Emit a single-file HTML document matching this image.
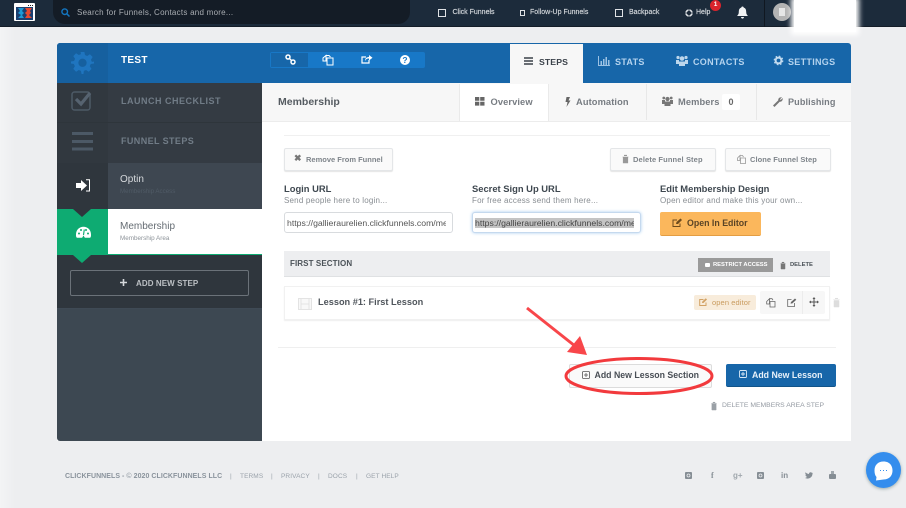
<!DOCTYPE html>
<html><head><meta charset="utf-8"><style>
*{box-sizing:border-box;margin:0;padding:0}
html,body{width:906px;height:508px;overflow:hidden;background:#edeef0;font-family:"Liberation Sans",sans-serif;position:relative}
#w{position:absolute;left:0;top:0;width:906px;height:508px;filter:blur(.3px)}
.a{position:absolute;white-space:nowrap}
svg{position:absolute;overflow:visible}
.t{font-weight:700}
.btn{position:absolute;background:#fafafa;border:1px solid #e4e6e8;border-radius:2px;box-shadow:0 1px 1px #e4e4e4;font-size:7.5px;color:#7f858b;font-weight:700;white-space:nowrap}
</style></head><body><div id="w">
<div class="a" style="left:0;top:27px;width:15px;height:481px;background:linear-gradient(90deg,#f3f4f5,#edeef0)"></div>
<div class="a" style="left:0;top:0;width:906px;height:27px;background:#1c2b3b;border-bottom:1px solid #141d28"></div>
<div class="a" style="left:14px;top:3px;width:21px;height:18px;background:#fff;border-radius:1px"></div>
<div class="a" style="left:16px;top:7px;width:17px;height:13px;background:#1b3f70"></div>
<svg style="left:14px;top:3px" width="21" height="18"><path d="M10 5L4 5 6 8 4 10 7 12 4 15H10L8 12 10 10 8 8Z" fill="#1d9ad6"/><path d="M11 5H18L16 8 17 10 15 12 18 15H11L13 12 11 10 13 8Z" fill="#e8492f"/><path d="M14 2h1v1h-1zM16 2h1v1h-1zM18 2h1v1h-1z" fill="#222"/></svg>
<div class="a" style="left:53px;top:0;width:357px;height:24px;background:#141c26;border-radius:0 0 12px 12px"></div>
<svg style="left:61px;top:8px" width="9" height="9"><circle cx="3.7" cy="3.7" r="2.8" fill="none" stroke="#1375bf" stroke-width="1.4"/><path d="M5.8 5.8L8.5 8.5" stroke="#1375bf" stroke-width="1.5"/></svg>
<div class="a" style="left:77px;top:8px;font-size:8px;color:#a9adb2;letter-spacing:.25px">Search for Funnels, Contacts and more...</div>
<div class="a" style="left:438px;top:9px;width:8px;height:8px;border:1.2px solid #dfe2e5"></div>
<div class="a" style="left:452.500px;top:8.500px;font-size:7px;color:#d5d9dd;-webkit-text-stroke:.15px #d5d9dd">Click Funnels</div>
<div class="a" style="left:520px;top:10px;width:5px;height:6px;border:1px solid #dfe2e5"></div>
<div class="a" style="left:530px;top:8.500px;font-size:7px;color:#d5d9dd;-webkit-text-stroke:.15px #d5d9dd">Follow-Up Funnels</div>
<div class="a" style="left:615px;top:9px;width:8px;height:8px;border:1.2px solid #dfe2e5"></div>
<div class="a" style="left:629px;top:8.500px;font-size:7px;color:#d5d9dd;-webkit-text-stroke:.15px #d5d9dd">Backpack</div>
<svg style="left:685px;top:9px" width="8" height="8"><circle cx="4" cy="4" r="3" fill="none" stroke="#dfe2e5" stroke-width="1.6"/><path d="M4 0v8M0 4h8" stroke="#1c2b3b" stroke-width=".7"/></svg>
<div class="a" style="left:696px;top:8.500px;font-size:7px;color:#d5d9dd;-webkit-text-stroke:.15px #d5d9dd">Help</div>
<div class="a t" style="left:710px;top:0;width:11px;height:11px;border-radius:50%;background:#d9242d;color:#fff;font-size:6.500px;text-align:center;line-height:10px">1</div>
<svg style="left:736px;top:6px" width="13" height="13"><path d="M6.500 0.500C7.400 .5 7.600 1 7.700 1.600 9.800 2.200 10.200 4 10.200 6 10.200 8 11 9 12 10H1C2 9 2.800 8 2.800 6 2.800 4 3.200 2.200 5.300 1.600 5.400 1 5.600 .5 6.500 .5ZM5 11H8C8 12 7.300 12.600 6.500 12.600S5 12 5 11Z" fill="#f1f3f4"/></svg>
<div class="a" style="left:764px;top:0;width:1px;height:27px;background:#101720"></div>
<div class="a" style="left:773px;top:3px;width:18px;height:18px;border-radius:50%;background:#b3b3b3"></div>
<div class="a" style="left:779px;top:8px;width:6px;height:8px;background:#e6e6e6"></div>
<div class="a" style="left:794px;top:0;width:62px;height:32px;background:#fff;box-shadow:0 0 5px 3px #fff"></div>

<div class="a" style="left:57px;top:43px;width:794px;height:398px;background:#fff;border-radius:3px 3px 0 0"></div>
<div class="a" style="left:57px;top:43px;width:794px;height:40px;background:#1766a9;border-radius:3px 3px 0 0"></div>
<div class="a" style="left:57px;top:43px;width:51px;height:40px;background:#16609f;border-radius:3px 0 0 0"></div>
<svg style="left:71px;top:51px" width="23" height="23" viewBox="0 0 24 24"><path fill="#1f75bf" fill-rule="evenodd" d="M10 1h4l.6 3.200 2.300 1 2.800-1.800 2.900 2.900-1.800 2.800 1 2.300L24 11v2l-3.400.6-1 2.300 1.800 2.800-2.900 2.900-2.800-1.800-2.300 1L13 24h-2l-.6-3.200-2.300-1-2.800 1.800-2.900-2.900L4 15.900l-1-2.300L0 13v-2l3.200-.6 1-2.300-1.800-2.800 2.900-2.900 2.800 1.800 2.300-1ZM12 8a4.300 4.300 0 1 0 .01 0Z"/></svg>
<div class="a t" style="left:121px;top:55px;font-size:10px;color:#fff;letter-spacing:.3px">TEST</div>
<div class="a" style="left:270px;top:52px;width:155px;height:16px;background:#1878c7;border-radius:2px"></div>
<div class="a" style="left:271px;top:53px;width:37px;height:14px;background:#1766a9"></div>
<svg style="left:285px;top:54px" width="11" height="11"><circle cx="3" cy="3" r="2" fill="none" stroke="#fff" stroke-width="1.500"/><circle cx="8" cy="8" r="2" fill="none" stroke="#fff" stroke-width="1.500"/><path d="M4 4l3 3" stroke="#fff" stroke-width="1.300"/></svg>
<svg style="left:322px;top:54px" width="12" height="12"><path d="M4 4V1.500H7L8.500 3M1 4L4 1.500V7H1ZM5 4H11V11H5Z" fill="none" stroke="#fff"/></svg>
<svg style="left:361px;top:54px" width="12" height="11"><path d="M8 6v3H1V3h4" fill="none" stroke="#fff" stroke-width="1.200"/><path d="M4 7C4 4 6 3 8 3V1l3.500 2.800L8 6.500V4.500C6 4.500 5 5 4 7Z" fill="#fff"/></svg>
<div class="a t" style="left:400px;top:55px;width:10px;height:10px;border-radius:50%;background:#fff;color:#1878c7;font-size:8.500px;line-height:10px;text-align:center">?</div>

<div class="a" style="left:510px;top:44px;width:73px;height:39px;background:#f7f7f7"></div>
<svg style="left:524px;top:57px" width="10" height="8"><path d="M0 1h9M0 4h9M0 7h9" stroke="#3a4149" stroke-width="1.400"/></svg>
<div class="a t" style="left:539px;top:56.500px;font-size:8.700px;color:#3a4149;letter-spacing:.1px">STEPS</div>
<svg style="left:598px;top:56px" width="12" height="10"><path d="M.5 0v9.500H12" fill="none" stroke="#9cc2e4"/><path d="M2.500 5h1.500v4H2.500zM5 3h1.500v6H5zM7.500 1h1.500v8H7.500zM10 4h1.500v5H10z" fill="#9cc2e4"/></svg>
<div class="a t" style="left:615px;top:56.500px;font-size:9px;color:#b4d3ee;letter-spacing:.3px">STATS</div>
<svg style="left:676px;top:55px" width="12" height="11"><circle cx="6" cy="3.500" r="2.300" fill="#bcd6ec"/><circle cx="2" cy="2.500" r="1.600" fill="#bcd6ec"/><circle cx="10" cy="2.500" r="1.600" fill="#bcd6ec"/><path d="M0 5h3L3 9H0zM9 5h3V9H9zM3 6.500h6V11H3z" fill="#bcd6ec"/></svg>
<div class="a t" style="left:693px;top:56.500px;font-size:9px;color:#b4d3ee;letter-spacing:.3px">CONTACTS</div>
<svg style="left:774px;top:56px" width="9" height="9"><circle cx="4.500" cy="4.500" r="2.900" fill="none" stroke="#c4dcf0" stroke-width="2"/><circle cx="4.500" cy="4.500" r="4.300" fill="none" stroke="#c4dcf0" stroke-width="1.100" stroke-dasharray="1.700 1.700"/></svg>
<div class="a t" style="left:788px;top:56.500px;font-size:9px;color:#b4d3ee;letter-spacing:.3px">SETTINGS</div>

<div class="a" style="left:57px;top:83px;width:205px;height:358px;background:#3d4852;border-radius:0 0 0 3px"></div>
<div class="a" style="left:57px;top:83px;width:205px;height:80px;background:#343b43"></div>
<div class="a" style="left:57px;top:83px;width:51px;height:80px;background:#31383f"></div>
<div class="a" style="left:57px;top:122px;width:205px;height:1px;background:#2e353b"></div>
<svg style="left:70px;top:90px" width="25" height="21"><rect x="2" y="2" width="18" height="18" rx="2.500" fill="none" stroke="#4d5a66" stroke-width="1.500"/><path d="M6 9l5 5 9-11" fill="none" stroke="#566370" stroke-width="3.200"/></svg>
<div class="a t" style="left:121px;top:96px;font-size:9px;color:#717c87;letter-spacing:.5px">LAUNCH CHECKLIST</div>
<svg style="left:72px;top:132px" width="22" height="19"><path d="M0 1.500h21M0 9.500h21M0 17h21" stroke="#4c5966" stroke-width="3"/></svg>
<div class="a t" style="left:121px;top:135.500px;font-size:9px;color:#717c87;letter-spacing:.4px">FUNNEL STEPS</div>

<div class="a" style="left:57px;top:163px;width:205px;height:46px;background:#3e4751"></div>
<div class="a" style="left:57px;top:163px;width:51px;height:46px;background:#2f363d"></div>
<svg style="left:76px;top:179px" width="15" height="13"><path d="M0 4h5V1l6 5.500L5 12V9H0Z" fill="#fff"/><path d="M10 .8h3.500V12H10" fill="none" stroke="#fff"/></svg>
<div class="a" style="left:120px;top:174px;font-size:10px;color:#d6d9dc">Optin</div>
<div class="a" style="left:120px;top:188px;font-size:6.200px;color:#505b66">Membership Access</div>

<div class="a" style="left:57px;top:209px;width:205px;height:45px;background:#fff"></div>
<div class="a" style="left:57px;top:209px;width:51px;height:46px;background:#0eab72"></div>
<div class="a" style="left:57px;top:254px;width:205px;height:1.500px;background:#0eab72"></div>
<div class="a" style="left:73px;top:209px;width:0;height:0;border-left:9px solid transparent;border-right:9px solid transparent;border-top:8px solid #2f363d"></div>
<svg style="left:76px;top:226px" width="15" height="13"><path d="M.8 11.800C-.2 10.500 0 9.500 0 8.500 0 4 3.300 .8 7.500 .8S15 4 15 8.500C15 9.500 15.200 10.500 14.200 11.800Z" fill="#fff"/><circle cx="3" cy="7.500" r="1" fill="#0eab72"/><circle cx="5" cy="4" r="1" fill="#0eab72"/><circle cx="12" cy="7.500" r="1" fill="#0eab72"/><circle cx="10" cy="4" r="1" fill="#0eab72"/><path d="M8.300 3.500L7.500 9" stroke="#0eab72" stroke-width="1.100"/><path d="M6 12L7.500 9.500 9 12Z" fill="#0eab72"/></svg>
<div class="a" style="left:120px;top:221px;font-size:10px;color:#656c73">Membership</div>
<div class="a" style="left:120px;top:235px;font-size:6.300px;color:#8d9399">Membership Area</div>

<div class="a" style="left:57px;top:255px;width:205px;height:54px;background:#2f363d;border-bottom:1px solid #3f4a55"></div>
<div class="a" style="left:73px;top:255px;width:0;height:0;border-left:9px solid transparent;border-right:9px solid transparent;border-top:8px solid #0eab72"></div>
<div class="a" style="left:70px;top:270px;width:179px;height:26px;border:1px solid #6b7279;border-radius:2px"></div>
<svg style="left:120px;top:279px" width="7" height="7"><path d="M3.500 0v7M0 3.500h7" stroke="#d6d9dc" stroke-width="1.600"/></svg>
<div class="a t" style="left:136px;top:278.500px;font-size:8px;color:#bcc0c4;letter-spacing:.08px">ADD NEW STEP</div>

<div class="a" style="left:262px;top:83px;width:589px;height:39px;background:#f7f7f7;border-bottom:1px solid #ececec"></div>
<div class="a t" style="left:278px;top:95.500px;font-size:10.500px;color:#555b61">Membership</div>
<div class="a" style="left:459px;top:84px;width:90px;height:37px;background:#fff;border-right:1px solid #eaeaea;border-left:1px solid #eaeaea"></div>
<div class="a" style="left:646px;top:84px;width:1px;height:36px;background:#e8e8e8"></div>
<div class="a" style="left:756px;top:84px;width:1px;height:36px;background:#e8e8e8"></div>
<svg style="left:475px;top:97px" width="10" height="9"><path d="M0 0h4.300v3.800H0zM5.200 0h4.300v3.800H5.200zM0 4.800h4.300v3.800H0zM5.200 4.800h4.300v3.800H5.200z" fill="#666"/></svg>
<div class="a t" style="left:490.500px;top:96.500px;font-size:9.300px;color:#777c82;letter-spacing:.1px">Overview</div>
<svg style="left:565px;top:97px" width="6" height="10"><path d="M1.500 0H5L3.500 3.500H5.500L1.500 10 2.500 5H.5Z" fill="#666"/></svg>
<div class="a t" style="left:576px;top:96.500px;font-size:9.300px;color:#777c82;letter-spacing:.1px">Automation</div>
<svg style="left:662px;top:96px" width="11" height="10"><circle cx="5.500" cy="3" r="2.100" fill="#777"/><circle cx="1.800" cy="2" r="1.400" fill="#777"/><circle cx="9.200" cy="2" r="1.400" fill="#777"/><path d="M0 4h3v4H0zM8 4h3v4H8zM2.500 5.500h6V10h-6z" fill="#777"/></svg>
<div class="a t" style="left:678px;top:96.500px;font-size:9.300px;color:#777c82;letter-spacing:.1px">Members</div>
<div class="a t" style="left:722px;top:94px;width:18px;height:16px;background:#fff;border-radius:2px;font-size:9px;color:#666;text-align:center;line-height:16px">0</div>
<svg style="left:773px;top:97px" width="10" height="10"><path d="M0 8.500L5.300 3.300C5 1.500 6.500 0 9 .3L7 2.300 7.700 3 9.700 1C10 3.500 8.500 5 6.700 4.700L1.500 10Z" fill="#777"/></svg>
<div class="a t" style="left:788px;top:96.500px;font-size:9.100px;color:#777c82;letter-spacing:.1px">Publishing</div>

<div class="a" style="left:284px;top:135px;width:546px;height:1px;background:#f0f0f0"></div>
<div class="btn" style="left:284px;top:148px;width:109px;height:23px;padding:6px 0 0 21px">Remove From Funnel</div>
<div class="a t" style="left:294px;top:153px;font-size:9px;color:#777">✖</div>
<div class="btn" style="left:610px;top:148px;width:106px;height:23px;padding:6px 0 0 22px;letter-spacing:.12px">Delete Funnel Step</div>
<svg style="left:622px;top:155px" width="7" height="8"><path d="M.5 2h6M1.200 2.500h4.600V8H1.200ZM2.300 1V.2h2.400V1" fill="#999" stroke="#999" stroke-width=".6"/></svg>
<div class="btn" style="left:725px;top:148px;width:106px;height:23px;padding:6px 0 0 24px;letter-spacing:.06px">Clone Funnel Step</div>
<svg style="left:737px;top:155px" width="9" height="9"><path d="M3 3V.5H5.500L6.500 2M.5 3L3 .5V5.500H.5ZM3.500 3H8.500V8.500H3.500Z" fill="none" stroke="#999" stroke-width=".8"/></svg>

<div class="a t" style="left:284px;top:183px;font-size:9.400px;color:#3f4850">Login URL</div>
<div class="a" style="left:284px;top:196px;font-size:8px;color:#888d92;letter-spacing:.2px">Send people here to login...</div>
<div class="a" style="left:284px;top:212px;width:169px;height:21px;background:#fff;border:1px solid #d8dbde;border-radius:3px;overflow:hidden"></div>
<div class="a" style="left:287px;top:218px;width:159px;overflow:hidden;font-size:8.700px;color:#555">https://gallieraurelien.clickfunnels.com/membership</div>

<div class="a t" style="left:472px;top:183px;font-size:9.400px;color:#3f4850">Secret Sign Up URL</div>
<div class="a" style="left:472px;top:196px;font-size:8px;color:#888d92;letter-spacing:.2px">For free access send them here...</div>
<div class="a" style="left:472px;top:212px;width:169px;height:21px;background:#fff;border:1px solid #c5d9ee;border-radius:3px;box-shadow:0 0 3px #a9cdf0"></div>
<div class="a" style="left:475px;top:218px;width:159px;height:10px;background:#c4c4c4"></div>
<div class="a" style="left:475px;top:218px;width:159px;overflow:hidden;font-size:8.700px;color:#444">https://gallieraurelien.clickfunnels.com/membership</div>

<div class="a t" style="left:660px;top:183px;font-size:9.400px;color:#3f4850">Edit Membership Design</div>
<div class="a" style="left:660px;top:196px;font-size:8px;color:#888d92;letter-spacing:.2px">Open editor and make this your own...</div>
<div class="a" style="left:660px;top:212px;width:101px;height:24px;background:#fbb75c;border-bottom:1px solid #e39d43;border-radius:2px"></div>
<svg style="left:672px;top:218px" width="11" height="10"><path d="M8 5.500V8.500H1V2H5" fill="none" stroke="#6d4a1c" stroke-width="1"/><path d="M4 6L4.500 4 8.500 .5 10 2 6 6Z" fill="#6d4a1c"/></svg>
<div class="a t" style="left:687px;top:218px;font-size:8.800px;color:#5a4426">Open In Editor</div>

<div class="a" style="left:284px;top:251px;width:546px;height:26px;background:#edeef0;border-bottom:1px solid #dfe1e3"></div>
<div class="a t" style="left:290px;top:258.500px;font-size:8px;color:#4b5258;letter-spacing:.1px">FIRST SECTION</div>
<div class="a" style="left:698px;top:258px;width:75px;height:14px;background:#9a9a9a"></div>
<div class="a" style="left:705px;top:263px;width:5px;height:4px;background:#fff;border-radius:1px"></div>
<div class="a t" style="left:713px;top:261.500px;font-size:5.800px;color:#fff">RESTRICT ACCESS</div>
<svg style="left:780px;top:262px" width="6" height="7"><path d="M.5 1.500h5M1 2h4V7H1ZM2 1V.2h2V1" fill="#777" stroke="#777" stroke-width=".5"/></svg>
<div class="a t" style="left:790px;top:261.500px;font-size:5.800px;color:#4b5258">DELETE</div>

<div class="a" style="left:284px;top:286px;width:546px;height:34px;background:#fff;border:1px solid #f1f1f1;box-shadow:0 1px 1px #eee"></div>
<svg style="left:298px;top:298px" width="14" height="12"><rect x=".5" y=".5" width="13" height="11" fill="#f8f8f8" stroke="#e3e3e3"/><path d="M3 .5v11M11 .5v11M3 6h8" stroke="#e3e3e3"/></svg>
<div class="a t" style="left:318px;top:297px;font-size:9.200px;color:#50565c">Lesson #1: First Lesson</div>
<div class="a" style="left:694px;top:295px;width:62px;height:15px;background:#f8ecdb;border-radius:2px"></div>
<svg style="left:699px;top:298px" width="9" height="8"><path d="M7 4.500V7.500H.7V1.500H4.500" fill="none" stroke="#d2a265"/><path d="M3 5L3.300 3.500 6.800 .3 8 1.500 4.500 5Z" fill="#d2a265"/></svg>
<div class="a" style="left:712px;top:298px;font-size:7.500px;color:#c99b5e;letter-spacing:.1px">open editor</div>
<div class="a" style="left:760px;top:291px;width:65px;height:23px;background:#f7f7f7;border-radius:2px"></div>
<div class="a" style="left:802px;top:291px;width:1px;height:23px;background:#ececec"></div>
<svg style="left:766px;top:298px" width="10" height="10"><path d="M3.500 3V.7H6L7 2.200M.7 3.500L3.500.7V6H.7ZM4 3.500H9V9H4Z" fill="none" stroke="#666" stroke-width=".8"/></svg>
<svg style="left:787px;top:298px" width="10" height="9"><path d="M7.500 5V8.500H.7V1.500H4.500" fill="none" stroke="#666" stroke-width=".8"/><path d="M3.500 5.500L4 4 8 .5 9.300 1.800 5.200 5.500Z" fill="#666"/></svg>
<svg style="left:809px;top:297px" width="10" height="10"><path d="M5 0L6.500 2H5.500V4.500H8V3.500L10 5 8 6.500V5.500H5.500V8H6.500L5 10 3.500 8H4.500V5.500H2V6.500L0 5 2 3.500V4.500H4.500V2H3.500Z" fill="#555"/></svg>
<svg style="left:833px;top:298px" width="7" height="9"><path d="M.3 1.800H6.700M1 2.500H6V9H1ZM2.200 1V.2H4.800V1" fill="#ddd" stroke="#ddd" stroke-width=".5"/></svg>

<div class="a" style="left:278px;top:347px;width:558px;height:1px;background:#efefef"></div>
<div class="a" style="left:569px;top:364px;width:143px;height:24px;background:#fafafa;border:1px solid #dcdcdc;border-radius:2px"></div>
<svg style="left:582px;top:371px" width="8" height="8"><rect x=".5" y=".5" width="7" height="7" rx="1" fill="none" stroke="#555" stroke-width=".8"/><path d="M4 2v4M2 4h4" stroke="#555" stroke-width=".8"/></svg>
<div class="a t" style="left:594.500px;top:370px;font-size:8.750px;color:#484e55">Add New Lesson Section</div>
<div class="a" style="left:726px;top:364px;width:110px;height:23px;background:#1766a9;border-radius:2px;border-bottom:1px solid #125489"></div>
<svg style="left:739px;top:370px" width="8" height="8"><rect x=".5" y=".5" width="7" height="7" rx="1" fill="none" stroke="#d8e8f6" stroke-width=".9"/><path d="M4 2v4M2 4h4" stroke="#d8e8f6" stroke-width=".9"/></svg>
<div class="a t" style="left:752px;top:369.500px;font-size:8.750px;color:#e8f1f9">Add New Lesson</div>
<svg style="left:711px;top:402px" width="6" height="8"><path d="M.2 1.300H5.800M.9 2H5.100V8H.9ZM2 1V.2H4V1" fill="#9aa0a6" stroke="#9aa0a6" stroke-width=".5"/></svg>
<div class="a" style="left:722px;top:402px;font-size:6.800px;color:#959ba3">DELETE MEMBERS AREA STEP</div>

<svg style="left:0;top:0" width="906" height="508">
<ellipse cx="639" cy="376" rx="73" ry="17.500" fill="none" stroke="#f23a3d" stroke-width="3"/>
<path d="M527 308L575 346" stroke="#f8464a" stroke-width="3"/>
<path d="M587 355L567 352 580 336Z" fill="#f8464a"/>
</svg>

<div class="a" style="left:65px;top:472.500px;font-size:7px;color:#8a939c;font-weight:700;letter-spacing:.05px">CLICKFUNNELS - <span style="font-weight:400">©</span> 2020 CLICKFUNNELS LLC</div>
<div class="a" style="left:230px;top:472.500px;font-size:6.500px;color:#9aa2aa;letter-spacing:.1px">|</div>
<div class="a" style="left:240px;top:472.500px;font-size:6.500px;color:#9aa2aa;letter-spacing:.1px">TERMS</div>
<div class="a" style="left:271px;top:472.500px;font-size:6.500px;color:#9aa2aa">|</div>
<div class="a" style="left:281px;top:472.500px;font-size:6.500px;color:#9aa2aa;letter-spacing:.1px">PRIVACY</div>
<div class="a" style="left:318px;top:472.500px;font-size:6.500px;color:#9aa2aa">|</div>
<div class="a" style="left:328px;top:472.500px;font-size:6.500px;color:#9aa2aa;letter-spacing:.1px">DOCS</div>
<div class="a" style="left:356px;top:472.500px;font-size:6.500px;color:#9aa2aa">|</div>
<div class="a" style="left:366px;top:472.500px;font-size:6.500px;color:#9aa2aa;letter-spacing:.1px">GET HELP</div>

<svg style="left:685px;top:472px" width="7" height="7"><rect width="7" height="7" rx="1" fill="#858d94"/><circle cx="3.500" cy="3.500" r="1.500" fill="none" stroke="#edeef0" stroke-width=".8"/></svg>
<div class="a t" style="left:711px;top:471px;font-size:8px;color:#858d94;font-family:'Liberation Serif',serif">f</div>
<div class="a t" style="left:733px;top:471px;font-size:8px;color:#a0a7ad">g+</div>
<svg style="left:757px;top:472px" width="7" height="7"><rect width="7" height="7" rx="1" fill="#858d94"/><circle cx="3.500" cy="3.500" r="1.500" fill="none" stroke="#edeef0" stroke-width=".8"/></svg>
<div class="a t" style="left:781px;top:471px;font-size:8px;color:#858d94">in</div>
<svg style="left:805px;top:472px" width="8" height="7"><path d="M0 6C3 7.500 7.500 6 7.500 1.500L8 .8 7 1C6 -.3 3.800 .2 4 2 2.500 2 1 1 .5 .3 0 1.500.5 2.500 1 3L.5 3C.5 3.800 1 4.500 2 4.800 1.500 5.500 1 5.800 0 6Z" fill="#858d94"/></svg>
<div class="a" style="left:829px;top:474px;width:7px;height:5px;background:#858d94;border-radius:1px"></div>
<div class="a" style="left:831px;top:471px;width:3px;height:3px;background:#a0a7ad"></div>

<div class="a" style="left:866px;top:452px;width:35px;height:36px;background:#348ded;border-radius:50%;box-shadow:0 1px 3px #9aa"></div>
<svg style="left:874px;top:461px" width="20" height="20"><path d="M9.500 0.500C15 .5 18.500 4 18.500 9.500S15 18.500 9.500 18.500L2 19.500 2.500 16C1 14.500.5 12 .5 9.500.5 4 4 .5 9.500 .5Z" fill="#fff"/><path d="M6 9.500h1M9 9.500h1M12 9.500h1" stroke="#348ded" stroke-width="1"/></svg>
</div></body></html>
